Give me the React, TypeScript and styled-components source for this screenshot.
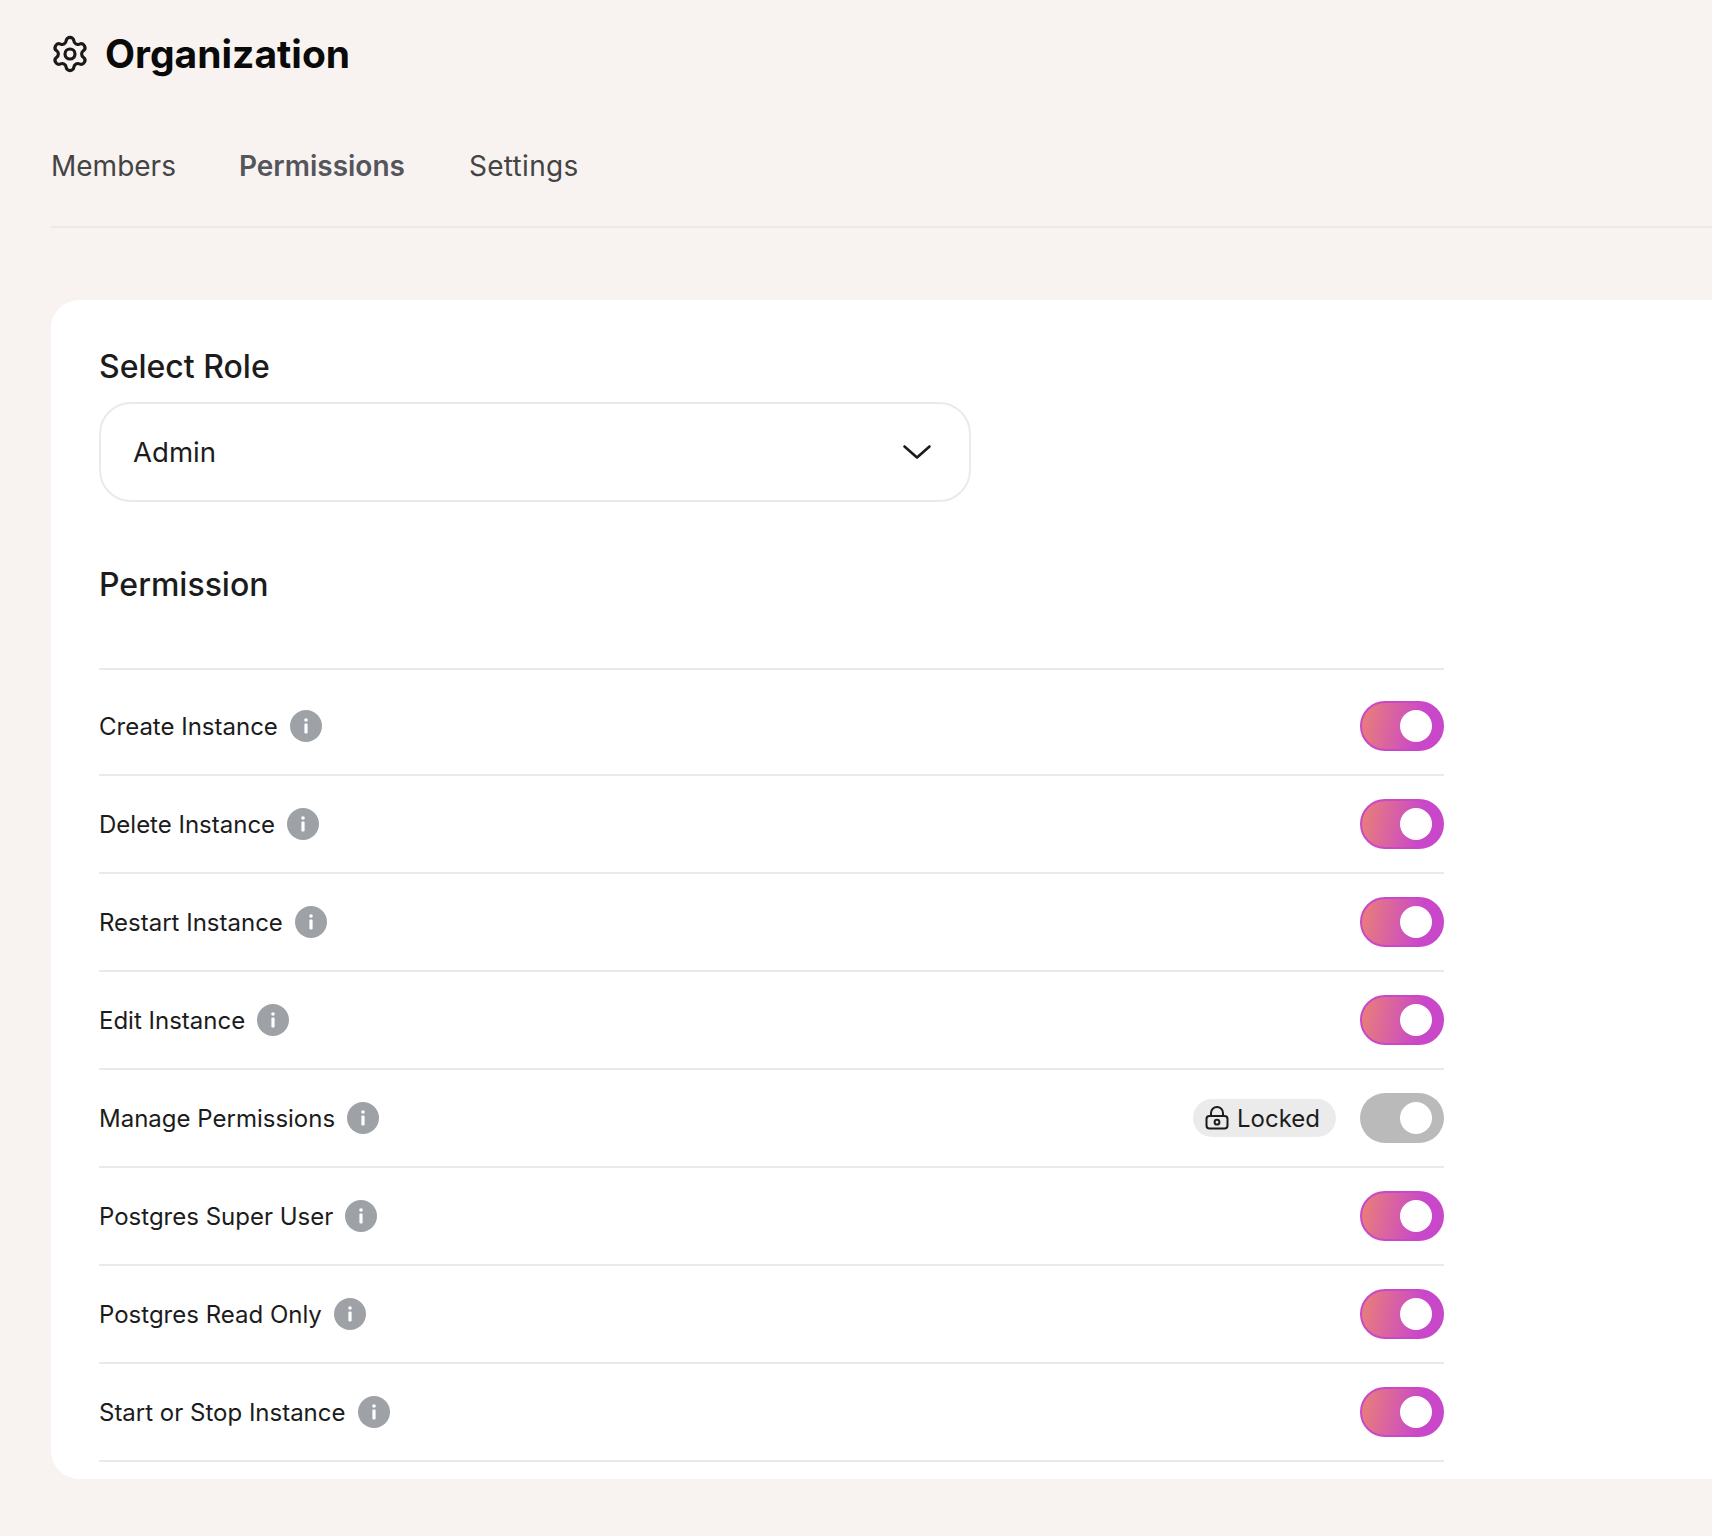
import { createGlobalStyle, styled } from 'styled-components';
import { Settings } from 'lucide-react';

const PERMISSIONS = [
  { name: 'Create Instance' },
  { name: 'Delete Instance' },
  { name: 'Restart Instance' },
  { name: 'Edit Instance' },
  { name: 'Manage Permissions', locked: true },
  { name: 'Postgres Super User' },
  { name: 'Postgres Read Only' },
  { name: 'Start or Stop Instance' },
];

function InfoIcon() {
  return (
    <svg width="32" height="32" viewBox="0 0 32 32">
      <circle cx="16" cy="16" r="16" fill="#9ea1a6" />
      <rect x="14.4" y="13.5" width="3.2" height="10" rx="1" fill="#fff" />
      <circle cx="16" cy="10" r="1.8" fill="#fff" />
    </svg>
  );
}

function LockIcon() {
  return (
    <svg width="24" height="24" viewBox="0 0 24 24" fill="none" stroke="#1c1c1c" strokeWidth="2">
      <path d="M6 10V7a6 6 0 0 1 12 0v3" />
      <rect x="1.5" y="10" width="21" height="12.5" rx="3" />
      <circle cx="12" cy="16.2" r="2.4" />
    </svg>
  );
}

function App() {
  return (
    <Page>
      <GlobalStyle />
      <Header>
        <GearIcon size={40} strokeWidth={1.9} color="#1a1a1a" />
        <Title>Organization</Title>
      </Header>
      <Tabs>
        <Tab>Members</Tab>
        <Tab $active>Permissions</Tab>
        <Tab>Settings</Tab>
      </Tabs>
      <Card>
        <SectionLabel>Select Role</SectionLabel>
        <Select>
          Admin
          <svg width="30" height="18" viewBox="0 0 30 18" fill="none" stroke="#1c1c1c" strokeWidth="2.6" strokeLinecap="round" strokeLinejoin="round">
            <path d="M2.5 3.5 15 14.5 27.5 3.5" />
          </svg>
        </Select>
        <PermissionLabel>Permission</PermissionLabel>
        <List>
          {PERMISSIONS.map((p) => (
            <Row key={p.name}>
              <RowName>
                {p.name}
                <InfoIcon />
              </RowName>
              <RowControls>
                {p.locked && (
                  <LockedBadge>
                    <LockIcon />
                    Locked
                  </LockedBadge>
                )}
                <Toggle $locked={p.locked}>
                  <Knob />
                </Toggle>
              </RowControls>
            </Row>
          ))}
        </List>
      </Card>
    </Page>
  );
}

export default App;

const GlobalStyle = createGlobalStyle`
  html, body {
    margin: 0;
    background: #f8f3f0;
  }
  body {
    font-family: Inter, "Liberation Sans", sans-serif;
    color: #1c1c1c;
    overflow: hidden;
  }
`;

const Page = styled.div`
  box-sizing: border-box;
  width: 1712px;
  height: 1536px;
  padding: 28px 0 0 51px;
  background: #f8f3f0;
  overflow: hidden;
`;

const Header = styled.div`
  display: flex;
  align-items: center;
  gap: 15px;
  height: 52px;
`;

const GearIcon = styled(Settings)`
  margin-left: -1px;
`;

const Title = styled.h1`
  margin: 0 0 2px;
  font-size: 39px;
  font-weight: 700;
  color: #0a0a0a;
`;

const Tabs = styled.div`
  display: flex;
  gap: 63px;
  height: 148px;
  box-sizing: border-box;
  padding-top: 65px;
  border-bottom: 2px solid #eaeaea;
`;

const Tab = styled.div<{ $active?: boolean }>`
  position: relative;
  height: 81px;
  font-size: 28px;
  line-height: 42px;
  font-weight: ${(props) => (props.$active ? 600 : 400)};
  color: ${(props) => (props.$active ? '#55555c' : '#444444')};

  &:last-child {
    margin-left: 1px;
    letter-spacing: 0.3px;
  }

  ${(props) =>
    props.$active &&
    `
    ::after {
      content: '';
      position: absolute;
      left: 0;
      right: 0;
      bottom: 0;
      height: 4px;
      background: linear-gradient(90deg, #f2c4dc 0%, #7fc6d6 50%, #a3d26c 100%);
    }
  `}
`;

const Card = styled.div`
  box-sizing: border-box;
  height: 1179px;
  margin-top: 72px;
  padding: 47px 0 0 48px;
  background: #fff;
  border-radius: 28px 0 0 28px;
`;

const SectionLabel = styled.div`
  font-size: 32px;
  line-height: 40px;
  font-weight: 500;
  color: #1c1c1c;
`;

const Select = styled.div`
  box-sizing: border-box;
  display: flex;
  align-items: center;
  justify-content: space-between;
  width: 872px;
  height: 100px;
  margin-top: 15px;
  padding: 0 37px 0 32px;
  border: 2px solid #eaeaea;
  border-radius: 32px;
  font-size: 27.6px;
`;

const PermissionLabel = styled(SectionLabel)`
  margin-top: 63px;
`;

const List = styled.div`
  width: 1345px;
  margin-top: 63px;
  border-top: 2px solid #eaeaea;
`;

const Row = styled.div`
  box-sizing: border-box;
  display: flex;
  align-items: center;
  justify-content: space-between;
  height: 98px;
  border-bottom: 2px solid #eaeaea;
  &:first-child {
    height: 106px;
    padding-top: 8px;
  }
`;

const RowName = styled.div`
  display: flex;
  align-items: center;
  gap: 12px;
  font-size: 24px;
  color: #1c1c1c;
`;

const RowControls = styled.div`
  display: flex;
  align-items: center;
  gap: 24px;
`;

const LockedBadge = styled.div`
  display: flex;
  align-items: center;
  gap: 8px;
  box-sizing: border-box;
  height: 38px;
  padding: 0 16px 0 12px;
  border-radius: 19px;
  background: #ebebeb;
  font-size: 24px;
`;

const Toggle = styled.div<{ $locked?: boolean }>`
  box-sizing: border-box;
  display: flex;
  align-items: center;
  justify-content: flex-end;
  width: 84px;
  height: 50px;
  padding-right: ${(props) => (props.$locked ? 12 : 10)}px;
  border-radius: 25px;
  background: ${(props) =>
    props.$locked ? '#bababa' : 'linear-gradient(100deg, #e77c7c 5%, #c948c9 72%)'};
  border: ${(props) => (props.$locked ? 'none' : '2px solid #c948c9')};
`;

const Knob = styled.div`
  width: 32px;
  height: 32px;
  border-radius: 50%;
  background: #fff;
`;
